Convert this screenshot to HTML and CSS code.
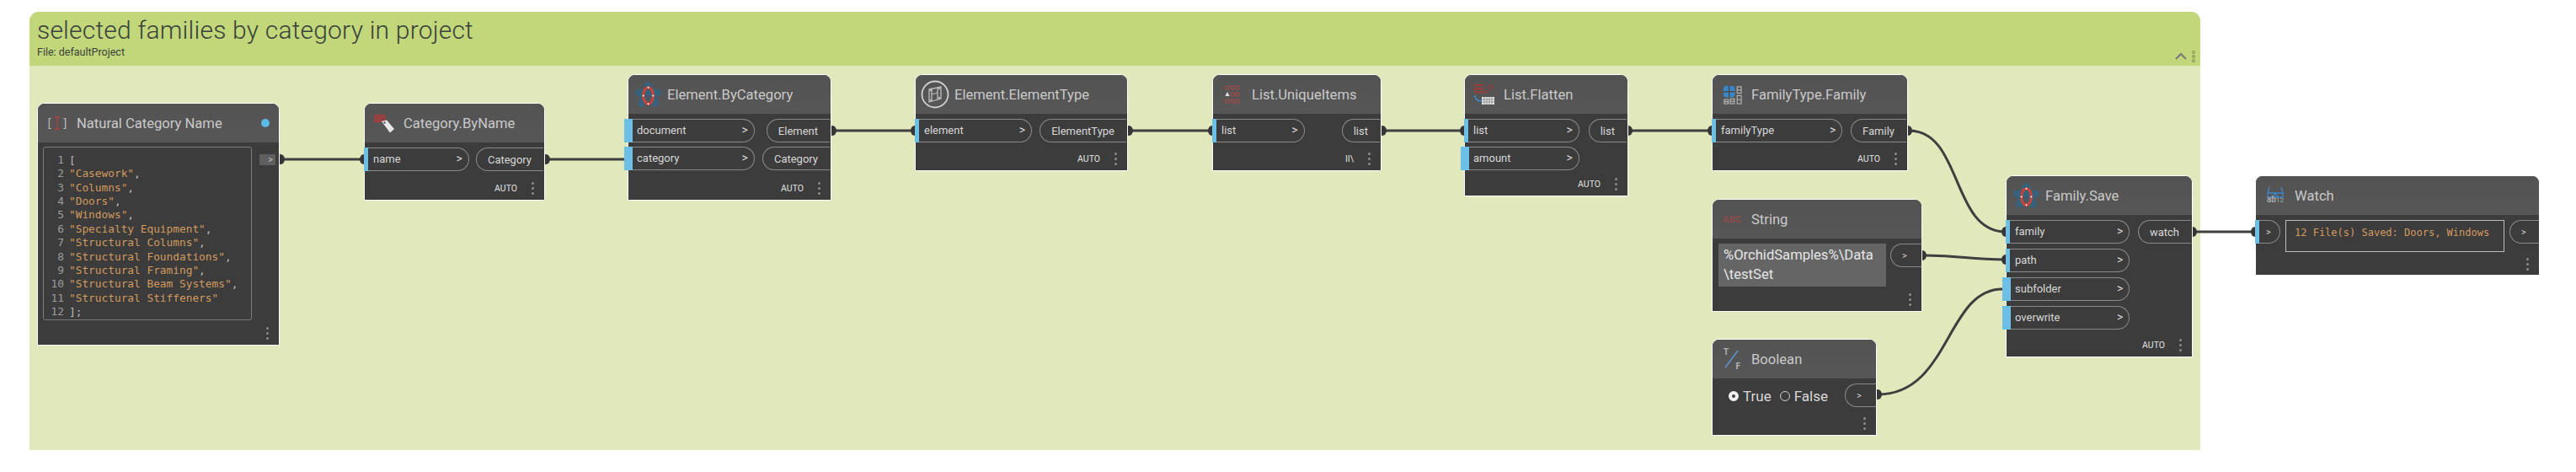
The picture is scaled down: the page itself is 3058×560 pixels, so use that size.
FILE: index.html
```html
<!DOCTYPE html>
<html lang="en">
<head>
<meta charset="utf-8">
<title>selected families by category in project</title>
<link rel="stylesheet" href="styles.css">
</head>
<body>
<main class="canvas">
  <section class="group">
    <header class="group-head">
      <h1 class="group-title">selected families by category in project</h1>
      <p class="group-file">File: defaultProject</p>
      <svg class="group-tools" width="26" height="14" viewBox="0 0 26 14"><path d="M1 10l6-6 6 6" fill="none" stroke="#77797a" stroke-width="2"/><g fill="none" stroke="#7d8a58"><circle cx="22" cy="2" r="1.5"/><circle cx="22" cy="7" r="1.5"/><circle cx="22" cy="12" r="1.5"/></g></svg>
    </header>
  </section>

  <svg class="wires" width="3058" height="560" viewBox="0 0 3058 560">
    <g fill="none" stroke="#3f3f3f" stroke-width="3">
      <path d="M334 189H430"/>
      <path d="M648 189H742"/>
      <path d="M988 155H1085"/>
      <path d="M1340 155H1439"/>
      <path d="M1641 155H1738"/>
      <path d="M1934 155H2032"/>
      <path d="M2266 155C2330 155 2316 275 2381 275"/>
      <path d="M2283 303C2330 303 2335 308 2381 308"/>
      <path d="M2229 468C2315 468 2310 343 2377 343"/>
      <path d="M2604 275H2677"/>
    </g>
    <g fill="#363636">
      <ellipse cx="333" cy="189" rx="5" ry="6"/><ellipse cx="432" cy="189" rx="5" ry="6"/>
      <ellipse cx="648" cy="189" rx="5" ry="6"/>
      <ellipse cx="988" cy="155" rx="5" ry="6"/><ellipse cx="1086" cy="155" rx="5" ry="6"/>
      <ellipse cx="1340" cy="155" rx="5" ry="6"/><ellipse cx="1439" cy="155" rx="5" ry="6"/>
      <ellipse cx="1641" cy="155" rx="5" ry="6"/><ellipse cx="1738" cy="155" rx="5" ry="6"/>
      <ellipse cx="1933" cy="155" rx="5" ry="6"/><ellipse cx="2032" cy="155" rx="5" ry="6"/>
      <ellipse cx="2265" cy="155" rx="5" ry="6"/><ellipse cx="2381" cy="275" rx="5" ry="6"/>
      <ellipse cx="2282" cy="303" rx="5" ry="6"/><ellipse cx="2381" cy="308" rx="5" ry="6"/>
      <ellipse cx="2229" cy="468" rx="5" ry="6"/>
      <ellipse cx="2603" cy="275" rx="5" ry="6"/><ellipse cx="2677" cy="275" rx="5" ry="6"/>
    </g>
  </svg>

  <article class="node n-natural">
    <header class="node-head">
      <span class="slot"><span class="icon-code"><span class="br">[</span><svg width="8" height="16" viewBox="0 0 8 16"><path d="M1 1h6M4 1v14M1 15h6" fill="none" stroke="#b23c3c" stroke-width="1.4"/></svg><span class="br">]</span></span></span>
      <span class="node-title natural-title">Natural Category Name</span>
      <span class="dot-state"></span>
    </header>
    <div class="code-wrap">
      <div class="code-box">
        <div class="code-line"><span class="ln">1</span><span class="pu">[</span></div>
        <div class="code-line"><span class="ln">2</span><span class="st">"Casework"</span><span class="pu">,</span></div>
        <div class="code-line"><span class="ln">3</span><span class="st">"Columns"</span><span class="pu">,</span></div>
        <div class="code-line"><span class="ln">4</span><span class="st">"Doors"</span><span class="pu">,</span></div>
        <div class="code-line"><span class="ln">5</span><span class="st">"Windows"</span><span class="pu">,</span></div>
        <div class="code-line"><span class="ln">6</span><span class="st">"Specialty Equipment"</span><span class="pu">,</span></div>
        <div class="code-line"><span class="ln">7</span><span class="st">"Structural Columns"</span><span class="pu">,</span></div>
        <div class="code-line"><span class="ln">8</span><span class="st">"Structural Foundations"</span><span class="pu">,</span></div>
        <div class="code-line"><span class="ln">9</span><span class="st">"Structural Framing"</span><span class="pu">,</span></div>
        <div class="code-line"><span class="ln">10</span><span class="st">"Structural Beam Systems"</span><span class="pu">,</span></div>
        <div class="code-line"><span class="ln">11</span><span class="st">"Structural Stiffeners"</span></div>
        <div class="code-line"><span class="ln">12</span><span class="pu">];</span></div>
      </div>
      <span class="code-out">&gt;</span>
    </div>
    <footer class="node-foot"><span class="kebab"><i></i><i></i><i></i></span></footer>
  </article>

  <article class="node n-catname">
    <header class="node-head">
      <span class="slot"><svg width="25" height="24" viewBox="0 0 25 24"><g fill="none" stroke="#b23c3c" stroke-width="1.2"><rect x="1" y="3" width="12" height="7.5" fill="#a83a3a" fill-opacity=".65"/><path d="M7 0v3M3.5 6h7M3.5 8.3h4"/></g><path d="M9 10l6-1.500L24 19l-5 4.500z" fill="#e8e8e8"/><circle cx="12.500" cy="11.500" r="1.200" fill="#555"/></svg></span>
      <span class="node-title">Category.ByName</span>
    </header>
    <div class="ports">
      <div class="inputs"><div class="port-in">name<b>&gt;</b></div></div>
      <div class="outputs"><div class="port-out">Category</div></div>
    </div>
    <footer class="node-foot"><span class="lacing">AUTO</span><span class="kebab"><i></i><i></i><i></i></span></footer>
  </article>

  <article class="node n-bycat">
    <header class="node-head">
      <span class="slot"><svg width="31" height="31" viewBox="0 0 32 32"><g fill="#35627c"><ellipse cx="16" cy="9" rx="6" ry="9"/><ellipse cx="7" cy="14" rx="7" ry="5" transform="rotate(20 7 14)"/><ellipse cx="25" cy="14" rx="7" ry="5" transform="rotate(-20 25 14)"/><ellipse cx="9" cy="24" rx="5" ry="7" transform="rotate(30 9 24)"/><ellipse cx="23" cy="24" rx="5" ry="7" transform="rotate(-30 23 24)"/></g><ellipse cx="16" cy="17" rx="6" ry="10" fill="none" stroke="#c4443c" stroke-width="3.4"/><g fill="#fff"><circle cx="16" cy="7" r="1"/><circle cx="16" cy="27" r="1"/><circle cx="10" cy="17" r="1"/><circle cx="22" cy="17" r="1"/></g></svg></span>
      <span class="node-title">Element.ByCategory</span>
    </header>
    <div class="ports">
      <div class="inputs">
        <div class="port-in has-default">document<b>&gt;</b></div>
        <div class="port-in has-default">category<b>&gt;</b></div>
      </div>
      <div class="outputs">
        <div class="port-out">Element</div>
        <div class="port-out">Category</div>
      </div>
    </div>
    <footer class="node-foot"><span class="lacing">AUTO</span><span class="kebab"><i></i><i></i><i></i></span></footer>
  </article>

  <article class="node n-eltype">
    <header class="node-head">
      <span class="slot"><svg width="34" height="34" viewBox="0 0 34 34"><circle cx="17" cy="17" r="15.5" fill="none" stroke="#cfcfcf" stroke-width="1.8"/><g fill="none" stroke="#bdbdbd" stroke-width="1.3"><path d="M10 11l14-3v14l-14 4z"/><path d="M13 10v15M20 9v14M13 17l7-2"/></g><g fill="#bdbdbd"><circle cx="12" cy="12" r="1.2"/><circle cx="22" cy="10" r="1.2"/><circle cx="12" cy="24" r="1.2"/><circle cx="22" cy="21" r="1.2"/></g></svg></span>
      <span class="node-title">Element.ElementType</span>
    </header>
    <div class="ports">
      <div class="inputs"><div class="port-in">element<b>&gt;</b></div></div>
      <div class="outputs"><div class="port-out">ElementType</div></div>
    </div>
    <footer class="node-foot"><span class="lacing">AUTO</span><span class="kebab"><i></i><i></i><i></i></span></footer>
  </article>

  <article class="node n-unique">
    <header class="node-head">
      <span class="slot"><svg width="18" height="24" viewBox="0 0 18 24"><g fill="none" stroke="#9c4a4a" stroke-width="1.2"><circle cx="3" cy="4" r="2.2"/><circle cx="9" cy="4" r="2.2"/><circle cx="15" cy="4" r="2.2"/><circle cx="9" cy="12" r="2.2"/><circle cx="15" cy="12" r="2.2"/><circle cx="3" cy="20" r="2.2"/><circle cx="9" cy="20" r="2.2"/><circle cx="15" cy="20" r="2.2"/></g><path d="M3 9l2.500 5h-5z" fill="#e6e6e6"/></svg></span>
      <span class="node-title">List.UniqueItems</span>
    </header>
    <div class="ports">
      <div class="inputs"><div class="port-in">list<b>&gt;</b></div></div>
      <div class="outputs"><div class="port-out">list</div></div>
    </div>
    <footer class="node-foot"><span class="lacing">II\</span><span class="kebab"><i></i><i></i><i></i></span></footer>
  </article>

  <article class="node n-flatten">
    <header class="node-head">
      <span class="slot"><svg width="24" height="24" viewBox="0 0 24 24"><g fill="#a33a3a"><rect x="0" y="0" width="3" height="2.5"/><rect x="4" y="0" width="3" height="2.5"/><rect x="8" y="0" width="3" height="2.5"/><rect x="0" y="4" width="3" height="2.5"/><rect x="4" y="4" width="3" height="2.5"/><rect x="8" y="4" width="3" height="2.5"/><rect x="0" y="8" width="3" height="2.5"/><rect x="4" y="8" width="3" height="2.5"/><rect x="8" y="8" width="3" height="2.5"/><rect x="12" y="8" width="3" height="2.5"/></g><path d="M17 8V1.500h5V8" fill="none" stroke="#8f3d3d" stroke-width="1.3"/><path d="M1 13c0 5 3 7 8 7" fill="none" stroke="#3d8fd0" stroke-width="1.6"/><rect x="9" y="15" width="15" height="9" fill="#e6e6e6"/><path d="M12 15v9M15 15v9M18 15v9M21 15v9M9 18h15M9 21h15" stroke="#777" stroke-width=".7"/></svg></span>
      <span class="node-title">List.Flatten</span>
    </header>
    <div class="ports">
      <div class="inputs">
        <div class="port-in">list<b>&gt;</b></div>
        <div class="port-in has-default">amount<b>&gt;</b></div>
      </div>
      <div class="outputs"><div class="port-out">list</div></div>
    </div>
    <footer class="node-foot"><span class="lacing">AUTO</span><span class="kebab"><i></i><i></i><i></i></span></footer>
  </article>

  <article class="node n-famtype">
    <header class="node-head">
      <span class="slot"><svg width="23" height="23" viewBox="0 0 24 24"><rect x="1" y="1" width="14" height="14" rx="3.5" fill="#3a86c8"/><path d="M8 1v14M1 8h14" stroke="#4a4a4a" stroke-width="1.5"/><g fill="none" stroke="#b5b5b5" stroke-width="1.2"><rect x="18" y="2" width="5" height="8"/><path d="M18 6h5"/><rect x="2" y="18" width="5" height="5"/><rect x="9.5" y="17" width="5" height="6"/><rect x="18" y="13" width="5" height="10"/><path d="M2 20.5h5M9.5 20h5M18 18h5"/></g></svg></span>
      <span class="node-title">FamilyType.Family</span>
    </header>
    <div class="ports">
      <div class="inputs"><div class="port-in">familyType<b>&gt;</b></div></div>
      <div class="outputs"><div class="port-out">Family</div></div>
    </div>
    <footer class="node-foot"><span class="lacing">AUTO</span><span class="kebab"><i></i><i></i><i></i></span></footer>
  </article>

  <article class="node n-string">
    <header class="node-head">
      <span class="slot"><span class="icon-abc">ABC</span></span>
      <span class="node-title">String</span>
    </header>
    <div class="string-body">
      <div class="string-text">%OrchidSamples%\Data<br>\testSet</div>
      <div class="port-out small-out">&gt;</div>
    </div>
    <footer class="node-foot"><span class="kebab"><i></i><i></i><i></i></span></footer>
  </article>

  <article class="node n-bool">
    <header class="node-head">
      <span class="slot"><span class="icon-tf"><span class="tf-t">T</span><svg class="tf-slash" width="18" height="24" viewBox="0 0 18 24"><path d="M1 22L16 2" stroke="#5c8fc0" stroke-width="1.8"/></svg><span class="tf-f">F</span></span></span>
      <span class="node-title">Boolean</span>
    </header>
    <div class="bool-body">
      <div class="radios">
        <span class="radio radio-on"></span><span class="radio-label">True</span>
        <span class="radio"></span><span class="radio-label">False</span>
      </div>
      <div class="port-out small-out">&gt;</div>
    </div>
    <footer class="node-foot"><span class="kebab"><i></i><i></i><i></i></span></footer>
  </article>

  <article class="node n-save">
    <header class="node-head">
      <span class="slot"><svg width="31" height="31" viewBox="0 0 32 32"><g fill="#35627c"><ellipse cx="16" cy="9" rx="6" ry="9"/><ellipse cx="7" cy="14" rx="7" ry="5" transform="rotate(20 7 14)"/><ellipse cx="25" cy="14" rx="7" ry="5" transform="rotate(-20 25 14)"/><ellipse cx="9" cy="24" rx="5" ry="7" transform="rotate(30 9 24)"/><ellipse cx="23" cy="24" rx="5" ry="7" transform="rotate(-30 23 24)"/></g><ellipse cx="16" cy="17" rx="6" ry="10" fill="none" stroke="#c4443c" stroke-width="3.4"/><g fill="#fff"><circle cx="16" cy="7" r="1"/><circle cx="16" cy="27" r="1"/><circle cx="10" cy="17" r="1"/><circle cx="22" cy="17" r="1"/></g></svg></span>
      <span class="node-title">Family.Save</span>
    </header>
    <div class="ports">
      <div class="inputs">
        <div class="port-in">family<b>&gt;</b></div>
        <div class="port-in">path<b>&gt;</b></div>
        <div class="port-in has-default">subfolder<b>&gt;</b></div>
        <div class="port-in has-default">overwrite<b>&gt;</b></div>
      </div>
      <div class="outputs"><div class="port-out">watch</div></div>
    </div>
    <footer class="node-foot"><span class="lacing">AUTO</span><span class="kebab"><i></i><i></i><i></i></span></footer>
  </article>

  <article class="node n-watch">
    <header class="node-head">
      <span class="slot"><span class="icon-watch"><svg width="20" height="14" viewBox="0 0 20 14"><g fill="none" stroke="#3f86c6" stroke-width="1.3"><path d="M1 8h18v5H1zM1 8L3 1M19 8L17 1M6 13l4-4 4 4"/></g></svg><span class="ab12">ab<small>12</small></span></span></span>
      <span class="node-title">Watch</span>
    </header>
    <div class="watch-body">
      <div class="port-in watch-in"><b>&gt;</b></div>
      <div class="watch-box">12 File(s) Saved: Doors, Windows</div>
      <div class="port-out small-out">&gt;</div>
    </div>
    <footer class="node-foot"><span class="kebab"><i></i><i></i><i></i></span></footer>
  </article>
</main>
</body>
</html>
```
FILE: styles.css
```css
* { box-sizing: border-box; }
html, body { margin: 0; padding: 0; background: #fff; }
body { width: 3058px; height: 560px; overflow: hidden; font-family: Roboto, "Open Sans", sans-serif; }
.canvas { position: relative; width: 3058px; height: 560px; }

/* group */
.group { position: absolute; left: 35px; top: 14px; width: 2577px; height: 520px; background: #e1e9bc; border-radius: 11px 11px 0 0; }
.group-head { position: relative; height: 64px; padding: 3px 9px; background: #c1d77a; border-radius: 11px 11px 0 0; color: #3a423a; }
.group-title { margin: 0; font-size: 30px; line-height: 37px; font-weight: 300; letter-spacing: .2px; white-space: nowrap; }
.group-file { margin: 0; font-size: 12.5px; line-height: 16px; }
.group-tools { position: absolute; right: 4px; bottom: 4px; }

.wires { position: absolute; left: 0; top: 0; }

/* nodes */
.node { position: absolute; display: flex; flex-direction: column; background: #3c3c3c; border: 1px solid #fff; border-radius: 9px 9px 0 0; color: #d6d6d6; }
.n-natural { left: 44px; top: 122px; width: 288px; height: 288px; }
.n-catname { left: 432px; top: 122px; width: 215px; height: 116px; }
.n-bycat { left: 745px; top: 88px; width: 242px; height: 150px; }
.n-eltype { left: 1086px; top: 88px; width: 253px; height: 115px; }
.n-unique { left: 1439px; top: 88px; width: 201px; height: 115px; }
.n-flatten { left: 1738px; top: 88px; width: 195px; height: 145px; }
.n-famtype { left: 2032px; top: 88px; width: 233px; height: 115px; }
.n-string { left: 2032px; top: 236px; width: 250px; height: 134px; }
.n-bool { left: 2032px; top: 402px; width: 196px; height: 115px; }
.n-save { left: 2381px; top: 208px; width: 222px; height: 216px; }
.n-watch { left: 2677px; top: 208px; width: 338px; height: 119px; }

.node-head { flex: none; display: flex; align-items: center; height: 46px; padding-right: 10px; background: linear-gradient(#535353, #575757); border-radius: 8px 8px 0 0; }
.slot { flex: none; display: flex; align-items: center; justify-content: center; width: 46px; height: 46px; }
.node-title { font-size: 16.6px; color: #c9c9c9; white-space: nowrap; }

/* ports */
.ports { display: flex; justify-content: space-between; padding-top: 6px; }
.inputs, .outputs { display: grid; grid-auto-rows: 28px; row-gap: 5.3px; }
.n-save .inputs { row-gap: 6px; }
.outputs { justify-items: end; padding-right: 1px; }
.port-in { position: relative; display: flex; align-items: center; justify-content: space-between; height: 28px; padding: 0 7px 2px 10px; gap: 66px; font-size: 13px; color: #d8d8d8; white-space: nowrap; border: 1px solid #8b8b8b; border-left: 0; border-radius: 0 14px 14px 0; }
.port-in::before { content: ""; position: absolute; left: -1px; top: -1px; bottom: -1px; width: 5px; background: #6cc0e8; }
.port-in.has-default::before { left: -5px; width: 10px; }
.port-in b { font-weight: 400; font-size: 14px; }
.port-out { display: flex; align-items: center; height: 28px; padding: 0 14px 0 13px; font-size: 13px; color: #d8d8d8; white-space: nowrap; border: 1px solid #8b8b8b; border-right: 0; border-radius: 14px 0 0 14px; }
.small-out { width: 37px; padding: 0 0 0 13px; font-size: 11px; }

.node-foot { flex: none; display: flex; align-items: center; justify-content: flex-end; gap: 17px; height: 28px; margin-top: auto; padding-right: 12px; }
.lacing { font-size: 10.5px; color: #e2e2e2; }
.kebab { display: grid; row-gap: 3px; width: 3px; }
.kebab i { display: block; width: 3px; height: 3px; border-radius: 50%; background: #8d8d8d; }

/* custom node bodies */
.code-wrap { position: relative; display: flex; padding: 5px 0 0 6px; }
.code-box { width: 248px; height: 206px; padding: 7px 0 0; border: 1px solid #7c7c7c; border-radius: 3px; font-family: "DejaVu Sans Mono", monospace; font-size: 12.8px; line-height: 16.36px; }
.code-line { display: flex; white-space: pre; }
.ln { flex: none; width: 24px; margin-right: 6px; text-align: right; color: #9d9d9d; }
.st { color: #d19a5f; }
.pu { color: #bdbdbd; }
.code-out { display: flex; align-items: center; justify-content: flex-end; width: 19px; height: 13px; margin: 9px 0 0 9px; padding-right: 3px; background: #5e5e5e; font-size: 11px; color: #c8c8c8; }

.string-body { display: flex; justify-content: space-between; align-items: flex-start; padding: 6px 0 0 7px; }
.string-text { width: 199px; height: 51px; padding: 2px 0 0 6px; background: #656565; font-size: 16.6px; line-height: 23px; color: #e6e6e6; white-space: nowrap; }
.bool-body { display: flex; justify-content: space-between; align-items: flex-start; padding: 6px 0 0 19px; }
.radios { display: flex; align-items: center; gap: 5px; height: 30px; font-size: 17px; color: #d8d8d8; }
.radio { width: 12px; height: 12px; border: 1px solid #cfcfcf; border-radius: 50%; }
.radio-on { border: 4px solid #f0f0f0; background: #3c3c3c; }
.radio-label { margin-right: 5px; }
.watch-body { display: flex; align-items: flex-start; padding-top: 6px; }
.watch-in { width: 29px; flex: none; gap: 0; padding: 0 0 0 12px; font-size: 11px; }
.watch-in b { font-size: 11px; }
.watch-box { flex: none; width: 260px; height: 38px; margin: 0 6px 0 6px; padding: 7px 0 0 10px; border: 1px solid #bcbcbc; font-family: "DejaVu Sans Mono", monospace; font-size: 12px; color: #d19a5f; white-space: nowrap; }

/* drawn icons */
.icon-code { display: flex; align-items: center; gap: 1px; font-family: "DejaVu Sans Mono", monospace; font-size: 14px; color: #b9b9b9; }
.natural-title { flex: 1; }
.dot-state { width: 10px; height: 10px; margin-right: 1px; border-radius: 50%; background: #5db9e8; }
.icon-abc { font-size: 11.5px; font-weight: 700; color: #8f4a4c; }
.icon-tf { position: relative; display: block; width: 20px; height: 28px; color: #b5b5b5; font-size: 10px; font-weight: 700; }
.tf-t { position: absolute; left: 0; top: 0; }
.tf-f { position: absolute; right: 0; bottom: 0; }
.tf-slash { position: absolute; left: 1px; top: 2px; }
.icon-watch { display: flex; flex-direction: column; align-items: center; }
.ab12 { margin-top: -3px; font-size: 10px; font-weight: 700; line-height: 10px; color: #a8a8a8; }
.ab12 small { font-size: 8px; font-weight: 400; }
```
